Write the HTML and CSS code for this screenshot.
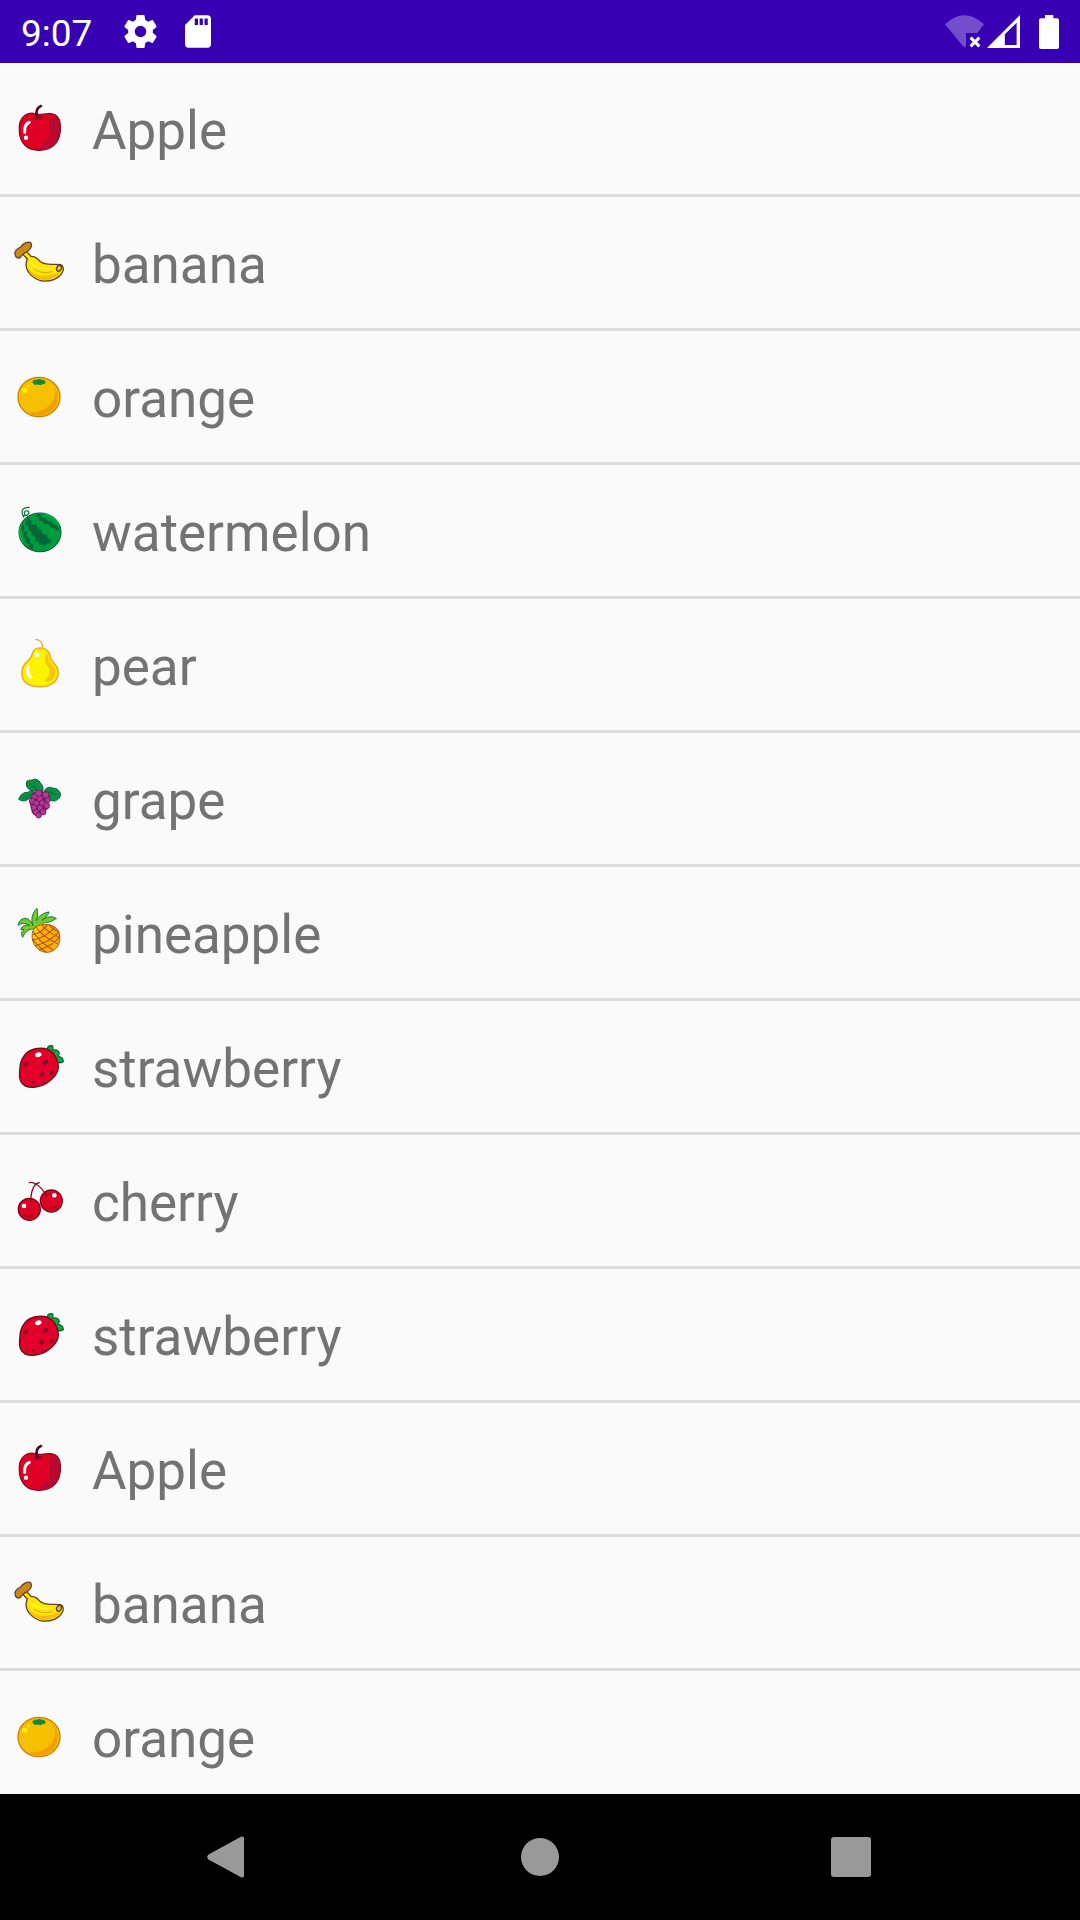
FILE: index.html
```html
<!DOCTYPE html>
<html lang="en">
<head>
<meta charset="utf-8">
<title>Fruit list</title>
<link rel="stylesheet" href="styles.css">
</head>
<body>
<svg class="sprite" aria-hidden="true">
  <symbol id="apple" viewBox="0 0 240 240">
    <path d="M110 73C98 68 83 69 73 77C60 87 56 105 58 125C59 150 75 175 100 179C122 183 145 179 158 169C176 156 184 130 181 104C180 84 170 73 154 71C138 69 124 75 110 73Z" fill="#e00024" stroke="#7c0a25" stroke-width="3.5"/>
    <path d="M153 80C168 79 177 86 178 104C181 130 173 153 157 165C144 175 127 178 111 176C134 164 149 150 149 128C149 108 143 95 153 80Z" fill="#b80a30"/>
    <path d="M98 83Q106 91 115 87Q123 91 128 82M104 78Q114 85 124 79" fill="none" stroke="#6b0922" stroke-width="3"/>
    <path d="M111 81Q105 54 123 48" fill="none" stroke="#4d0c27" stroke-width="8" stroke-linecap="round"/>
    <path d="M88 97Q72 103 74 127" fill="none" stroke="#fff" stroke-width="9" stroke-linecap="round"/>
    <circle cx="78" cy="143" r="6.5" fill="#fff"/>
  </symbol>
  <symbol id="banana" viewBox="0 0 240 240">
    <path d="M68 91L79 81L93 97C105 97 113 103 120 112C138 127 160 118 182 122C191 126 192 137 187 145C178 164 153 173 127 171C102 166 80 147 78 123C78 116 81 110 82 105Z" fill="#ffe600" stroke="#67402b" stroke-width="4" stroke-linejoin="round"/>
    <path d="M83 131C99 158 142 164 184 141C174 161 151 169 128 167C106 163 88 150 83 131Z" fill="#f5bd00"/>
    <path d="M101 135Q123 151 158 143" fill="none" stroke="#d4a900" stroke-width="3"/>
    <path d="M90 115Q112 139 155 132" fill="none" stroke="#fff238" stroke-width="5"/>
    <path d="M62 69C69 58 84 52 91 55C98 63 94 73 84 81C76 87 66 88 63 98C55 106 46 101 45 90C43 80 50 75 62 69Z" fill="#c78b18" stroke="#67402b" stroke-width="4"/>
    <ellipse cx="177" cy="133" rx="7" ry="9" fill="#e7cf22" stroke="#57401c" stroke-width="4" transform="rotate(25 177 133)"/>
  </symbol>
  <symbol id="orange" viewBox="0 0 240 240">
    <ellipse cx="117" cy="117" rx="63" ry="59" fill="#f5c000" stroke="#cc8209" stroke-width="4"/>
    <path d="M158 79C181 104 177 145 151 162C130 177 104 175 87 164C123 164 151 149 163 121C168 106 166 91 158 79Z" fill="#f2a000"/>
    <path d="M98 73Q100 63 111 67Q116 60 124 66Q135 65 136 74Q134 79 128 77Q123 83 113 78Q103 83 98 73Z" fill="#099447" stroke="#167031" stroke-width="2"/>
    <path d="M108 73L114 69L119 73L128 71" fill="none" stroke="#066c2d" stroke-width="2"/>
    <circle cx="74" cy="97" r="8" fill="#ffed00"/><circle cx="85" cy="84" r="4" fill="#ffed00"/>
  </symbol>
  <symbol id="watermelon" viewBox="0 0 240 240">
    <ellipse cx="120" cy="121" rx="63" ry="58" fill="#009b3d" stroke="#006a3a" stroke-width="3.5"/>
    <path d="M65 96Q51 123 69 151M133 66Q167 73 178 103" fill="none" stroke="#08b34b" stroke-width="4"/>
    <path d="M84 77L95 87L93 98L108 96L113 109L125 113L128 126L143 129L142 139L155 143L150 154L140 154L135 163L126 157L118 160L116 151L105 147L106 135L93 129L95 119L85 114L86 103L76 98L78 88Z" fill="#00673a"/>
    <path d="M111 65L121 66L127 78L138 77L143 88L154 88L161 98L172 99L180 117L169 114L163 107L151 106L145 96L134 97L128 88L117 87L118 78L110 74ZM67 94L74 107L70 116L82 121L80 134L91 140L89 151L101 160L97 174L85 166L88 157L76 151L78 142L68 133L72 123L63 111Z" fill="#00673a"/>
    <path d="M72 77Q66 70 66 58Q68 46 89 46M67 70Q84 74 87 62Q84 53 75 58Q71 64 76 70" fill="none" stroke="#08713f" stroke-width="3.5"/>
  </symbol>
  <symbol id="pear" viewBox="0 0 240 240">
    <path d="M128 67Q130 43 107 40" fill="none" stroke="#edab26" stroke-width="4" stroke-linecap="round"/>
    <path d="M120 66C108 66 99 73 97 84C94 99 84 103 74 115C65 127 65 142 67 152C71 173 91 182 121 182C149 182 170 169 174 147C176 131 172 121 160 110C149 99 152 90 147 80C140 70 132 66 120 66Z" fill="#fbf300" stroke="#f2ad2b" stroke-width="5"/>
    <path d="M138 83C147 82 142 101 151 112C166 123 172 139 161 155C154 166 141 169 135 163C144 153 151 145 148 132C146 120 137 118 136 105Q134 89 138 83Z" fill="#f8c500"/>
    <path d="M85 123Q78 142 93 154" fill="none" stroke="#fff" stroke-width="9" stroke-linecap="round"/>
    <circle cx="111" cy="86" r="7" fill="#fff"/>
  </symbol>
  <symbol id="grape" viewBox="0 0 240 240">
    <g fill="#079447" stroke="#075f31" stroke-width="3">
      <path d="M102 93C89 93 78 84 79 69C80 59 90 61 97 60C106 54 119 61 121 69C129 75 130 87 129 95Z"/>
      <path d="M56 118C60 105 71 96 84 97C94 90 107 94 105 104C99 112 91 113 84 118C75 125 63 123 56 118Z"/>
      <path d="M133 94C137 82 151 79 159 85C170 83 179 92 182 103C180 116 171 121 164 123C150 123 140 115 138 104Z"/>
      <path d="M89 70L124 100M101 64L110 83M101 79H89M64 116L101 100M77 108L86 115M137 93L169 104M150 88L157 99L151 110" fill="none" stroke-width="2"/>
    </g>
    <path d="M99 96L133 96L149 110L144 146L116 173L96 159L88 123Z" fill="#831d70"/>
    <g fill="#b03c90" stroke="#701460" stroke-width="2.5">
      <circle cx="104" cy="110" r="9"/><circle cx="137" cy="105" r="10"/><circle cx="116" cy="100" r="10"/>
      <circle cx="97" cy="124" r="9"/><circle cx="120" cy="116" r="9"/><circle cx="143" cy="120" r="8"/>
      <circle cx="109" cy="130" r="9"/><circle cx="127" cy="129" r="9"/><circle cx="140" cy="137" r="9"/>
      <circle cx="102" cy="143" r="9"/><circle cx="120" cy="144" r="9"/><circle cx="108" cy="157" r="9"/>
      <circle cx="129" cy="156" r="9"/><circle cx="116" cy="166" r="8"/>
    </g>
  </symbol>
  <symbol id="pineapple" viewBox="0 0 240 240">
    <path d="M100 96C93 84 93 60 111 43C113 57 115 66 108 80C117 67 130 56 147 54C145 65 132 73 126 79C140 67 156 65 169 73C157 83 143 86 129 87L105 106C90 101 75 113 68 130C62 119 64 112 72 107L62 106C67 95 78 91 89 94C75 86 65 87 54 94C57 78 67 72 79 73C88 75 96 86 100 96Z" fill="#74c42a" stroke="#0a7c46" stroke-width="3" stroke-linejoin="round"/>
    <path d="M72 107Q88 96 102 102M69 83Q87 84 100 99M109 57L103 94M137 62L105 95M155 74L111 98" fill="none" stroke="#8fd028" stroke-width="2"/>
    <path d="M107 99C122 89 147 88 164 99C184 112 184 145 169 162C153 179 130 179 113 164C94 149 90 113 107 99Z" fill="#ffaf00" stroke="#ad5522" stroke-width="3"/>
    <path d="M98 116Q102 99 126 94Q110 124 117 165Q97 149 98 116Z" fill="#ffcc00"/>
    <path d="M109 99Q123 126 174 150M98 110Q114 139 159 168M97 132Q108 154 138 174M126 93Q142 116 179 130M147 92Q158 106 178 114M98 122Q123 119 143 91M97 139Q140 129 164 100M105 155Q151 144 178 113M117 167Q158 155 178 130" fill="none" stroke="#ae5723" stroke-width="3.2"/>
  </symbol>
  <symbol id="strawberry" viewBox="0 0 240 240">
    <path d="M141 65Q144 49 158 54L159 67Q174 63 178 76L174 85Q190 87 190 101Q177 108 168 100L151 88Z" fill="#10a840" stroke="#066d33" stroke-width="4" stroke-linejoin="round"/>
    <path d="M145 65L172 96M158 81L165 72M158 81L151 91" fill="none" stroke="#08652f" stroke-width="2"/>
    <path d="M75 80C90 62 121 56 143 64C163 73 175 95 175 118C174 141 156 155 139 166C120 178 93 181 76 174C59 165 57 151 59 133C60 110 62 95 75 80Z" fill="#e2002a" stroke="#71101d" stroke-width="4.5"/>
    <g fill="#850e25"><ellipse cx="78" cy="108" rx="8" ry="5.5" transform="rotate(-55 78 108)"/><ellipse cx="136" cy="103" rx="9" ry="7" transform="rotate(-30 136 103)"/><ellipse cx="126" cy="139" rx="8" ry="6" transform="rotate(-30 126 139)"/><ellipse cx="155" cy="134" rx="7" ry="6" transform="rotate(-40 155 134)"/><ellipse cx="99" cy="163" rx="7" ry="4"/><path d="M124 169Q131 157 140 163Z"/></g>
    <ellipse cx="115" cy="80" rx="10" ry="7" fill="#fff" transform="rotate(-15 115 80)"/>
  </symbol>
  <symbol id="cherry" viewBox="0 0 240 240">
    <g fill="#df0024" stroke="#7b0821" stroke-width="4"><circle cx="88" cy="142" r="33"/><circle cx="154" cy="117" r="33"/></g>
    <path d="M65 157Q89 170 112 148Q102 170 84 168Q72 166 65 157ZM131 132Q157 145 181 121Q174 139 155 142Q139 142 131 132Z" fill="#a80324"/>
    <path d="M92 121Q92 84 107 66Q125 75 140 102M88 62Q97 59 107 66L118 62" fill="none" stroke="#830c20" stroke-width="4" stroke-linecap="round"/>
    <circle cx="72" cy="132" r="7" fill="#fff"/><circle cx="163" cy="100" r="7" fill="#fff"/>
  </symbol>
</svg>

<div class="screen">
  <header class="status">
    <span class="time">9:07</span>
    <svg class="gear" viewBox="2 2 20 20"><path fill-rule="evenodd" d="M19.43 12.98c.04-.32.07-.64.07-.98s-.03-.66-.07-.98l2.11-1.65c.19-.15.24-.42.12-.64l-2-3.46c-.12-.22-.39-.3-.61-.22l-2.49 1c-.52-.4-1.08-.73-1.69-.98l-.38-2.65C14.46 2.18 14.25 2 14 2h-4c-.25 0-.46.18-.49.42l-.38 2.65c-.61.25-1.17.59-1.69.98l-2.49-1c-.23-.09-.49 0-.61.22l-2 3.46c-.13.22-.07.49.12.64l2.11 1.65c-.04.32-.07.65-.07.98s.03.66.07.98l-2.11 1.65c-.19.15-.24.42-.12.64l2 3.46c.12.22.39.3.61.22l2.49-1c.52.4 1.08.73 1.69.98l.38 2.65c.03.24.24.42.49.42h4c.25 0 .46-.18.49-.42l.38-2.65c.61-.25 1.17-.59 1.69-.98l2.49 1c.23.09.49 0 .61-.22l2-3.46c.12-.22.07-.49-.12-.64l-2.11-1.65zM12 15.5a3.5 3.5 0 1 1 0-7a3.5 3.5 0 0 1 0 7z"/></svg>
    <svg class="card" viewBox="4 2 16 20"><path fill-rule="evenodd" d="M18 2h-8L4.02 8 4 20c0 1.1.9 2 2 2h12c1.100 0 2-.9 2-2V4c0-1.100-.9-2-2-2zm-6 6h-2V4h2v4zm3 0h-2V4h2v4zm3 0h-2V4h2v4z"/></svg>
    <span class="spacer"></span>
    <svg class="wifi" viewBox="0 0 117 102"><path d="M0 28Q58-26 117 28L97 54H63V91L58 98Z" opacity=".3"/><path d="M77 68L103 94M103 68L77 94" fill="none" stroke="#fff" stroke-width="9"/></svg>
    <svg class="signal" viewBox="0 0 98 98"><path fill-rule="evenodd" d="M0 98L98 0V98ZM53 57V89H88V23Z"/></svg>
    <svg class="battery" viewBox="0 0 60 102"><path d="M18 0H43V10H54Q60 10 60 16V96Q60 102 54 102H6Q0 102 0 96V16Q0 10 6 10H18Z"/></svg>
  </header>

  <ul class="list">
    <li class="row"><svg class="fruit"><use href="#apple"/></svg><span class="name">Apple</span></li>
    <li class="row"><svg class="fruit"><use href="#banana"/></svg><span class="name">banana</span></li>
    <li class="row"><svg class="fruit"><use href="#orange"/></svg><span class="name">orange</span></li>
    <li class="row"><svg class="fruit"><use href="#watermelon"/></svg><span class="name">watermelon</span></li>
    <li class="row"><svg class="fruit"><use href="#pear"/></svg><span class="name">pear</span></li>
    <li class="row"><svg class="fruit"><use href="#grape"/></svg><span class="name">grape</span></li>
    <li class="row"><svg class="fruit"><use href="#pineapple"/></svg><span class="name">pineapple</span></li>
    <li class="row"><svg class="fruit"><use href="#strawberry"/></svg><span class="name">strawberry</span></li>
    <li class="row"><svg class="fruit"><use href="#cherry"/></svg><span class="name">cherry</span></li>
    <li class="row"><svg class="fruit"><use href="#strawberry"/></svg><span class="name">strawberry</span></li>
    <li class="row"><svg class="fruit"><use href="#apple"/></svg><span class="name">Apple</span></li>
    <li class="row"><svg class="fruit"><use href="#banana"/></svg><span class="name">banana</span></li>
    <li class="row"><svg class="fruit"><use href="#orange"/></svg><span class="name">orange</span></li>
  </ul>

  <nav class="navbar">
    <svg class="back" viewBox="0 0 37 42"><path d="M1.500 18.500L34 .8Q37-.5 37 2.500V39.500Q37 42.500 34 41.200L1.500 23.500Q-1 21 1.500 18.500Z"/></svg>
    <span class="home"></span>
    <span class="recent"></span>
  </nav>
</div>
</body>
</html>
```
FILE: styles.css
```css
* { box-sizing: border-box; }
body { margin: 0; font-family: Roboto, sans-serif; background: #fafafa; }
.sprite { display: none; }
.screen { width: 1080px; height: 1920px; display: flex; flex-direction: column; overflow: hidden; }
.status { flex: none; height: 63px; padding: 0 21px; display: flex; align-items: center; background: #3700b3; color: #fff; }
.status svg { flex: none; fill: #fff; }
.time { width: 102.5px; font-size: 37px; line-height: 43px; padding-top: 3px; }
.gear { width: 33px; height: 33px; }
.card { width: 26px; height: 33px; margin-left: 28.5px; }
.spacer { flex: 1; }
.wifi { width: 39px; height: 34px; }
.signal { width: 33px; height: 33px; margin-left: 3px; }
.battery { width: 20px; height: 34px; margin-left: 19px; }
.list { flex: 1; min-height: 0; margin: 0; padding: 0; list-style: none; overflow: hidden; }
.row { height: 134px; padding-top: 27px; display: flex; align-items: flex-start; border-bottom: 3px solid #dcdcdc; }
.fruit { flex: none; width: 80px; height: 80px; }
.name { margin-left: 12px; padding-top: 10px; font-size: 53px; line-height: 63px; color: #737373; }
.navbar { flex: none; height: 126px; padding: 0 209px 0 207px; display: flex; align-items: center; background: #000; }
.back { width: 37px; height: 42px; fill: #999; }
.home { width: 38px; height: 38px; margin-left: 277px; border-radius: 50%; background: #999; }
.recent { width: 40px; height: 40px; margin-left: auto; border-radius: 3px; background: #999; }
```
